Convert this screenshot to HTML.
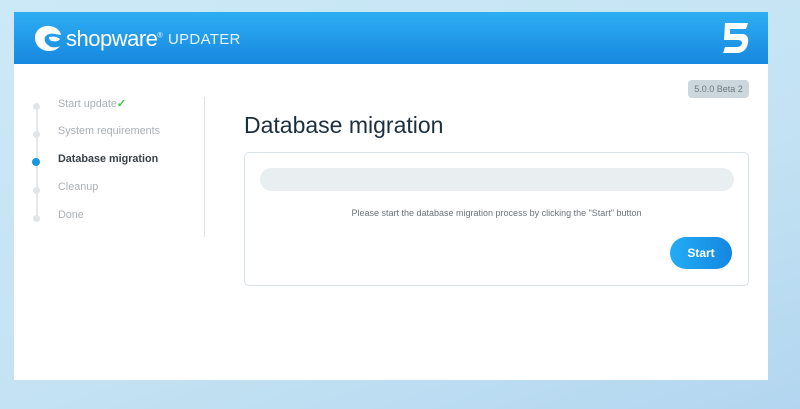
<!DOCTYPE html>
<html><head><meta charset="utf-8"><style>
*{margin:0;padding:0;box-sizing:border-box}
body{width:800px;height:409px;overflow:hidden;background:linear-gradient(160deg,#cbe9f6 0%,#c3e2f3 60%,#b3d6f0 100%);font-family:"Liberation Sans",sans-serif;position:relative}
.box{position:absolute;left:14px;top:12px;width:754px;height:368px;background:#fff}
.hdr{position:absolute;left:0;top:0;width:754px;height:52px;background:linear-gradient(180deg,#2daef3,#1787df)}
.brand{position:absolute;left:52px;top:14px;color:#fff;font-size:22px;letter-spacing:-0.5px}
.upd{position:absolute;left:154px;top:19px;color:#e6f4fd;font-size:15px;letter-spacing:0.3px}
.ver{position:absolute;left:674px;top:68px;width:61px;height:18px;background:#ccd6dd;border-radius:4px;font-size:9px;color:#6b7780;text-align:center;line-height:18px}
.nav{position:absolute;left:0;top:85px;width:191px;height:140px;border-right:1px solid #dfe4e8}
.line{position:absolute;left:22px;top:10px;width:2px;height:114px;background:#e6e8ea}
.it{position:absolute;left:44px;font-size:10.8px;color:#aab0b6}
.dot{position:absolute;left:19px;width:7px;height:7px;border-radius:50%;background:#e2e5e8}
h1{position:absolute;left:230px;top:100px;font-weight:normal;font-size:23px;color:#1c2f3e}
.panel{position:absolute;left:230px;top:140px;width:505px;height:134px;border:1px solid #d9e2e8;border-radius:5px}
.bar{position:absolute;left:15px;top:15px;width:474px;height:23px;background:#e9eef1;border-radius:12px}
.msg{position:absolute;left:0;width:100%;top:55px;text-align:center;font-size:9px;color:#6a737a}
.btn{position:absolute;left:425px;top:84px;width:62px;height:32px;border-radius:16px;background:linear-gradient(90deg,#23acf5,#1487e0);color:#fff;font-weight:bold;font-size:12px;text-align:center;line-height:32px}
</style></head><body>
<div class="box">
<div class="hdr">
<svg style="position:absolute;left:19px;top:13px" width="30" height="27" viewBox="0 0 30 27"><path d="M17 1C9 0 2 5 2 13c0 8 7 13 14 13 5 0 9-2 11-5-4 2-9 2-12-1-3-2-4-5-3-8 2-3 6-4 10-3l6 1c-1-5-5-8-11-9z" fill="#fff"/><path d="M16 12c4-1 9 0 11 2-1 2-4 3-8 2-2 0-3-2-3-4z" fill="#fff"/></svg>
<div class="brand">shopware<sup style="font-size:7px">®</sup></div>
<div class="upd">UPDATER</div>
<svg style="position:absolute;left:708px;top:10px" width="28" height="33" viewBox="0 0 28 33"><path d="M3 1h23l-2 6H8v5h12c5 0 7 4 6 9-1 6-5 10-11 10H1l2-6h12c3 0 5-2 5-4s-2-3-4-3H2z" fill="#fff"/></svg>
</div>
<div class="ver">5.0.0 Beta 2</div>
<div class="nav">
<div class="line"></div>
<div class="dot" style="top:6px"></div><div class="it" style="top:0">Start update<span style="color:#3fc33f;font-weight:bold">✓</span></div>
<div class="dot" style="top:34px"></div><div class="it" style="top:28px">System requirements</div>
<div class="dot" style="top:61px;background:#1a97e0;width:8px;height:8px;left:18px"></div><div class="it" style="top:56px;color:#3a4147;font-weight:bold">Database migration</div>
<div class="dot" style="top:90px"></div><div class="it" style="top:84px">Cleanup</div>
<div class="dot" style="top:118px"></div><div class="it" style="top:112px">Done</div>
</div>
<h1>Database migration</h1>
<div class="panel">
<div class="bar"></div>
<div class="msg">Please start the database migration process by clicking the "Start" button</div>
<div class="btn">Start</div>
</div>
</div>
</body></html>
